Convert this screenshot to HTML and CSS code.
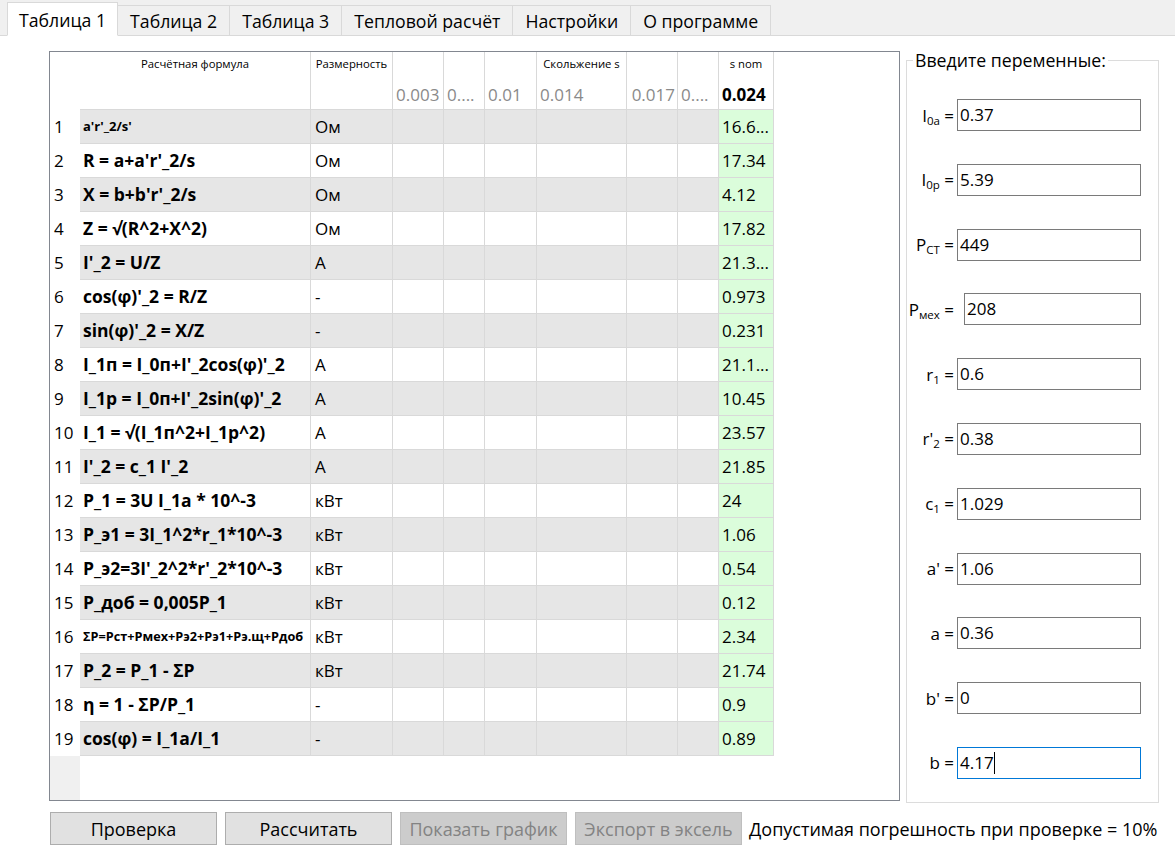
FILE: index.html
```html
<!DOCTYPE html>
<html lang="ru">
<head>
<meta charset="utf-8">
<title>Таблица 1</title>
<link rel="stylesheet" href="styles.css">
</head>
<body>
<div class="tabs">
  <div class="tab active">Таблица 1</div>
  <div class="tab">Таблица 2</div>
  <div class="tab">Таблица 3</div>
  <div class="tab">Тепловой расчёт</div>
  <div class="tab">Настройки</div>
  <div class="tab">О программе</div>
</div>
<div class="page">
  <div class="main">
    <div class="grid-box">
      <div class="grid">
        <div class="c rh"></div><div class="c h1">Расчётная формула</div><div class="c h1">Размерность</div><div class="c h1"></div><div class="c h1"></div><div class="c h1"></div><div class="c h1">Скольжение s</div><div class="c h1"></div><div class="c h1"></div><div class="c h1">s nom</div>
        <div class="c rh"></div><div class="c h2"></div><div class="c h2"></div><div class="c h2">0.003</div><div class="c h2">0....</div><div class="c h2">0.01</div><div class="c h2">0.014</div><div class="c h2 right">0.017</div><div class="c h2">0....</div><div class="c h2 nom">0.024</div>

        <div class="c rh">1</div><div class="c f odd small">a'r'_2/s'</div><div class="c odd">Ом</div><div class="c odd"></div><div class="c odd"></div><div class="c odd"></div><div class="c odd"></div><div class="c odd"></div><div class="c odd"></div><div class="c g">16.6...</div>
        <div class="c rh">2</div><div class="c f">R = a+a'r'_2/s</div><div class="c">Ом</div><div class="c"></div><div class="c"></div><div class="c"></div><div class="c"></div><div class="c"></div><div class="c"></div><div class="c g">17.34</div>
        <div class="c rh">3</div><div class="c f odd">X = b+b'r'_2/s</div><div class="c odd">Ом</div><div class="c odd"></div><div class="c odd"></div><div class="c odd"></div><div class="c odd"></div><div class="c odd"></div><div class="c odd"></div><div class="c g">4.12</div>
        <div class="c rh">4</div><div class="c f">Z = √(R^2+X^2)</div><div class="c">Ом</div><div class="c"></div><div class="c"></div><div class="c"></div><div class="c"></div><div class="c"></div><div class="c"></div><div class="c g">17.82</div>
        <div class="c rh">5</div><div class="c f odd">I'_2 = U/Z</div><div class="c odd">А</div><div class="c odd"></div><div class="c odd"></div><div class="c odd"></div><div class="c odd"></div><div class="c odd"></div><div class="c odd"></div><div class="c g">21.3...</div>
        <div class="c rh">6</div><div class="c f">cos(φ)'_2 = R/Z</div><div class="c">-</div><div class="c"></div><div class="c"></div><div class="c"></div><div class="c"></div><div class="c"></div><div class="c"></div><div class="c g">0.973</div>
        <div class="c rh">7</div><div class="c f odd">sin(φ)'_2 = X/Z</div><div class="c odd">-</div><div class="c odd"></div><div class="c odd"></div><div class="c odd"></div><div class="c odd"></div><div class="c odd"></div><div class="c odd"></div><div class="c g">0.231</div>
        <div class="c rh">8</div><div class="c f">I_1п = I_0п+I'_2cos(φ)'_2</div><div class="c">А</div><div class="c"></div><div class="c"></div><div class="c"></div><div class="c"></div><div class="c"></div><div class="c"></div><div class="c g">21.1...</div>
        <div class="c rh">9</div><div class="c f odd">I_1р = I_0п+I'_2sin(φ)'_2</div><div class="c odd">А</div><div class="c odd"></div><div class="c odd"></div><div class="c odd"></div><div class="c odd"></div><div class="c odd"></div><div class="c odd"></div><div class="c g">10.45</div>
        <div class="c rh">10</div><div class="c f">I_1 = √(I_1п^2+I_1р^2)</div><div class="c">А</div><div class="c"></div><div class="c"></div><div class="c"></div><div class="c"></div><div class="c"></div><div class="c"></div><div class="c g">23.57</div>
        <div class="c rh">11</div><div class="c f odd">I'_2 = c_1 I'_2</div><div class="c odd">А</div><div class="c odd"></div><div class="c odd"></div><div class="c odd"></div><div class="c odd"></div><div class="c odd"></div><div class="c odd"></div><div class="c g">21.85</div>
        <div class="c rh">12</div><div class="c f">P_1 = 3U I_1а * 10^-3</div><div class="c">кВт</div><div class="c"></div><div class="c"></div><div class="c"></div><div class="c"></div><div class="c"></div><div class="c"></div><div class="c g">24</div>
        <div class="c rh">13</div><div class="c f odd">P_э1 = 3I_1^2*r_1*10^-3</div><div class="c odd">кВт</div><div class="c odd"></div><div class="c odd"></div><div class="c odd"></div><div class="c odd"></div><div class="c odd"></div><div class="c odd"></div><div class="c g">1.06</div>
        <div class="c rh">14</div><div class="c f">P_э2=3I'_2^2*r'_2*10^-3</div><div class="c">кВт</div><div class="c"></div><div class="c"></div><div class="c"></div><div class="c"></div><div class="c"></div><div class="c"></div><div class="c g">0.54</div>
        <div class="c rh">15</div><div class="c f odd">P_доб = 0,005P_1</div><div class="c odd">кВт</div><div class="c odd"></div><div class="c odd"></div><div class="c odd"></div><div class="c odd"></div><div class="c odd"></div><div class="c odd"></div><div class="c g">0.12</div>
        <div class="c rh">16</div><div class="c f tiny">ΣP=Pст+Pмех+Pэ2+Pэ1+Pэ.щ+Pдоб</div><div class="c">кВт</div><div class="c"></div><div class="c"></div><div class="c"></div><div class="c"></div><div class="c"></div><div class="c"></div><div class="c g">2.34</div>
        <div class="c rh">17</div><div class="c f odd">P_2 = P_1 - ΣP</div><div class="c odd">кВт</div><div class="c odd"></div><div class="c odd"></div><div class="c odd"></div><div class="c odd"></div><div class="c odd"></div><div class="c odd"></div><div class="c g">21.74</div>
        <div class="c rh">18</div><div class="c f">η = 1 - ΣP/P_1</div><div class="c">-</div><div class="c"></div><div class="c"></div><div class="c"></div><div class="c"></div><div class="c"></div><div class="c"></div><div class="c g">0.9</div>
        <div class="c rh">19</div><div class="c f odd">cos(φ) = I_1а/I_1</div><div class="c odd">-</div><div class="c odd"></div><div class="c odd"></div><div class="c odd"></div><div class="c odd"></div><div class="c odd"></div><div class="c odd"></div><div class="c g">0.89</div>
      </div>
    </div>

    <fieldset class="vars">
      <legend>Введите переменные:</legend>
      <div class="var"><span class="lbl">I<sub>0a</sub> =</span><span class="field">0.37</span></div>
      <div class="var"><span class="lbl">I<sub>0p</sub> =</span><span class="field">5.39</span></div>
      <div class="var"><span class="lbl">P<sub>CT</sub> =</span><span class="field">449</span></div>
      <div class="var"><span class="lbl">P<sub>мех</sub> =</span><span class="field shift">208</span></div>
      <div class="var"><span class="lbl">r<sub>1</sub> =</span><span class="field">0.6</span></div>
      <div class="var"><span class="lbl">r'<sub>2</sub> =</span><span class="field">0.38</span></div>
      <div class="var"><span class="lbl">c<sub>1</sub> =</span><span class="field">1.029</span></div>
      <div class="var"><span class="lbl">a' =</span><span class="field">1.06</span></div>
      <div class="var"><span class="lbl">a =</span><span class="field">0.36</span></div>
      <div class="var"><span class="lbl">b' =</span><span class="field">0</span></div>
      <div class="var"><span class="lbl">b =</span><span class="field focus">4.17<span class="caret"></span></span></div>
    </fieldset>
  </div>

  <div class="actions">
    <button class="btn">Проверка</button>
    <button class="btn">Рассчитать</button>
    <button class="btn" disabled>Показать график</button>
    <button class="btn" disabled>Экспорт в эксель</button>
    <span class="note">Допустимая погрешность при проверке = 10%</span>
  </div>
</div>
</body>
</html>
```

FILE: styles.css
```css
* { box-sizing: border-box; }
html, body { margin: 0; padding: 0; }
body {
  width: 1175px;
  height: 853px;
  background: #fff;
  font-family: "Open Sans", "Noto Sans", sans-serif;
  color: #000;
  overflow: hidden;
}

.tabs {
  height: 36px;
  background: #f0f0f0;
  border-bottom: 1px solid #d9d9d9;
  display: flex;
  align-items: flex-end;
  padding-left: 7px;
}
.tab {
  height: 31px;
  margin-bottom: -1px;
  padding: 0 12px;
  border: 1px solid #d9d9d9;
  border-left: none;
  font-size: 17.7px;
  line-height: 30px;
  color: #000;
  background: #f0f0f0;
}
.tab.active {
  height: 34px;
  border-left: 1px solid #d9d9d9;
  border-bottom: 1px solid #fff;
  background: #fff;
  padding: 0 11px;
  line-height: 34px;
}

.page {
  padding: 15px 0 0 49px;
}
.main {
  display: flex;
  align-items: flex-start;
  height: 750px;
}

.grid-box {
  width: 851px;
  height: 750px;
  border: 1px solid #828790;
  background: linear-gradient(to right, #f0f0f0 30px, #fff 30px);
}
.grid {
  display: grid;
  grid-template-columns: 30px 231px 82px 51px 41px 52px 90px 51px 41px 55px;
  grid-template-rows: 25px 33px repeat(19, 34px);
  width: 774px;
}
.c {
  background: #fff;
  border-right: 1px solid #d9d9d9;
  border-bottom: 1px solid #d9d9d9;
  font-size: 17px;
  line-height: 33px;
  padding-left: 4px;
  white-space: nowrap;
  overflow: hidden;
}
.c.rh {
  border: none;
  padding-left: 4px;
}
.c.h1 {
  border-bottom: none;
  font-size: 11.3px;
  line-height: 24px;
  text-align: center;
  padding: 0;
}
.c.h2 {
  color: #8a8a8a;
  font-size: 17px;
  line-height: 36px;
  padding-left: 3px;
}
.c.h2.right { text-align: right; padding-right: 2px; }
.c.h2.nom { color: #000; font-weight: 700; }
.c.odd { background: #e6e6e6; }
.c.f { font-weight: 700; padding-left: 3px; font-size: 17.5px; }
.c.f.small { font-size: 13px; }
.c.f.tiny { font-size: 12.7px; }
.c.g { background: #dbfddb; padding-left: 3px; }

.vars {
  margin: -2px 0 0 6px;
  padding: 28px 0 0 0;
  width: 253px;
  height: 754px;
  border: 1px solid #dcdcdc;
  display: flex;
  flex-direction: column;
  gap: 32.8px;
}
.vars legend {
  margin-left: 6px;
  padding: 0 2px 0 2px;
  font-size: 17.7px;
  line-height: 22px;
}
.var {
  display: flex;
  align-items: center;
  height: 32px;
}
.lbl {
  width: 50px;
  text-align: right;
  padding-right: 3px;
  font-size: 17px;
  white-space: nowrap;
}
.lbl sub {
  font-size: 11.5px;
  vertical-align: -3px;
  line-height: 0;
}
.field {
  width: 184px;
  height: 32px;
  border: 1px solid #7a7a7a;
  font-size: 17px;
  line-height: 30px;
  padding-left: 2px;
  background: #fff;
}
.field.shift { margin-left: 7px; width: 177px; }
.field.focus { border-color: #0078d7; }
.caret {
  display: inline-block;
  width: 1px;
  height: 22px;
  background: #000;
  vertical-align: -5px;
}

.actions {
  display: flex;
  align-items: center;
  gap: 8px;
  margin-top: 11px;
  padding-left: 1px;
}
.btn {
  width: 167px;
  height: 33px;
  border: 1px solid #adadad;
  background: #e1e1e1;
  font-family: inherit;
  font-size: 18px;
  color: #000;
  padding: 0;
}
.btn:disabled {
  background: #cccccc;
  border-color: #bfbfbf;
  color: #838383;
}
.note {
  font-size: 18px;
  margin-left: -1px;
  white-space: nowrap;
}
```
